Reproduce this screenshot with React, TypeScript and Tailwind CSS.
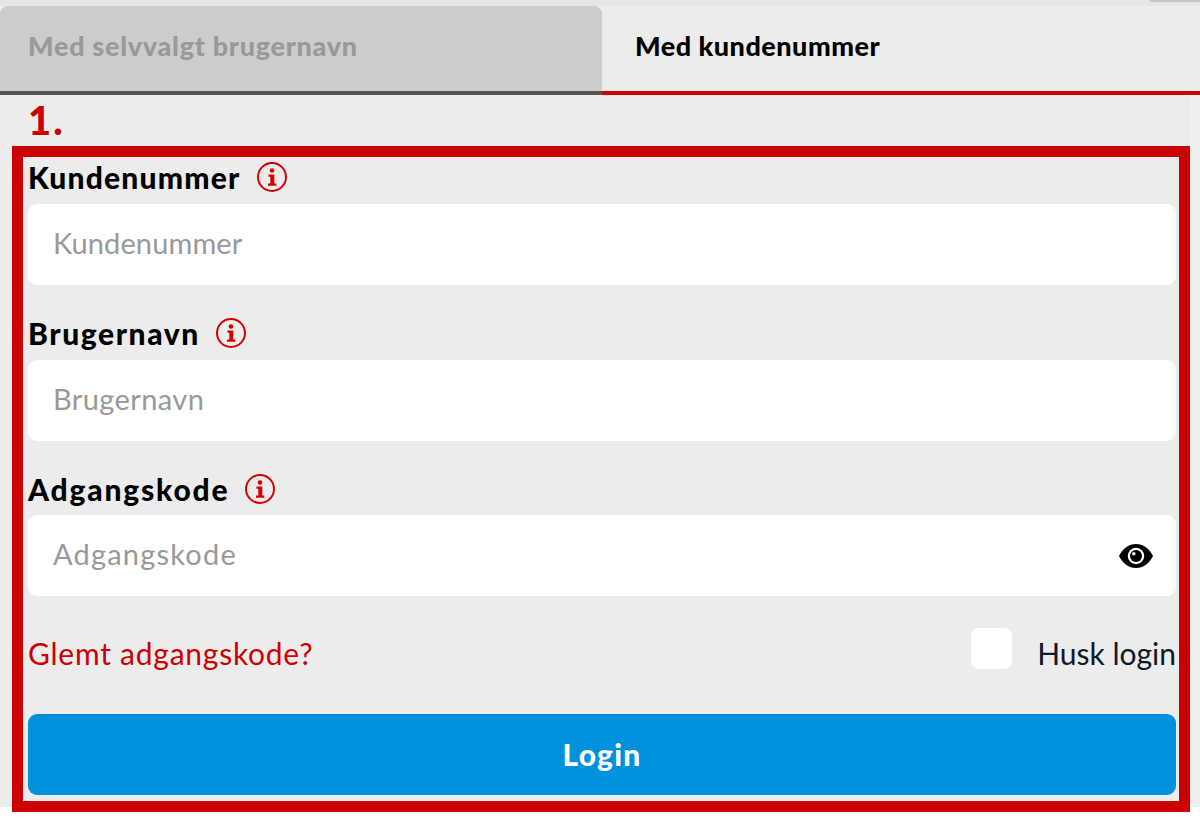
const fields = [
  { label: 'Kundenummer', labelClass: 'mb-[7px] tracking-[1.2px]', inputClass: 'tracking-[0.1px]' },
  { label: 'Brugernavn', labelClass: 'mb-[7px] tracking-[1.6px]', inputClass: 'tracking-[0.4px]' },
  { label: 'Adgangskode', labelClass: 'mb-[6px] tracking-[1.8px]', inputClass: 'tracking-[1.2px]', secret: true },
];

function InfoIcon() {
  return (
    <svg width="32" height="32" viewBox="0 0 32 32" fill="none" className="shrink-0">
      <circle cx="16" cy="16" r="14" stroke="#d40000" strokeWidth="2" />
      <circle cx="16" cy="9.500" r="2.300" fill="#d40000" />
      <path d="M12.500 13.500h5.800v9h2v2.200h-8.300v-2.200h2.300v-6.800h-1.800z" fill="#d40000" />
    </svg>
  );
}

function EyeIcon() {
  return (
    <svg width="36" height="26" viewBox="0 0 36 26" className="shrink-0">
      <path d="M1 13C5 5 11 1 18 1S31 5 35 13c-4 8-10 12-17 12S5 21 1 13z" fill="#000" />
      <circle cx="18" cy="13" r="8.200" fill="#fff" />
      <circle cx="18" cy="13" r="6" fill="#000" />
      <circle cx="15.800" cy="10.800" r="1.800" fill="#fff" />
    </svg>
  );
}

export default function App() {
  return (
    <div className="w-[1200px] h-[824px] bg-white font-['Lato',sans-serif] overflow-hidden">
      <div className="h-[807px] bg-[#efefef]">
        <div className="h-[6px] bg-[#e6e6e6] flex justify-end">
          <div className="w-[50px] h-[2px] bg-[#c4c4c4]" />
        </div>

        {/* Tabs */}
        <div className="flex h-[89px]">
          <div className="w-[602px] flex items-center pl-[28px] pb-[4px] bg-[#cccccc] rounded-t-[8px] border-b-4 border-[#555555] text-[27px] tracking-[0.7px] font-black text-[#999999]">
            Med selvvalgt brugernavn
          </div>
          <div className="flex-1 flex items-center pl-[33px] pb-[4px] bg-[#ececec] border-b-4 border-[#cc0000] text-[27px] tracking-[0.5px] font-black text-black">
            Med kundenummer
          </div>
        </div>

        <div className="w-[1190px] h-[712px] bg-[#ececec]">
          <div className="h-[51px] pl-[28px] pt-[2px] text-[40px] leading-[46px] tracking-[2px] font-black text-[#cc0000]">1.</div>

          {/* Login form */}
          <div className="ml-[12px] w-[1178px] h-[666px] border-[11px] border-[#cc0000] pl-[5px] pr-[3px]">
            <div className="flex flex-col gap-[28px]">
              {fields.map((field) => (
                <div key={field.label}>
                  <div className={`h-10 flex items-center gap-[15px] text-[30px] font-black text-black ${field.labelClass}`}>
                    <span>{field.label}</span>
                    <InfoIcon />
                  </div>
                  <div className="h-[81px] flex items-center pl-[25px] pr-[22px] bg-white rounded-[9px]">
                    <input
                      type="text"
                      placeholder={field.label}
                      className={`flex-1 min-w-0 pb-[4px] bg-transparent text-[29px] outline-none placeholder:text-[#999999] ${field.inputClass}`}
                    />
                    {field.secret && <EyeIcon />}
                  </div>
                </div>
              ))}
            </div>

            <div className="mt-[32px] h-[41px] flex items-center justify-between">
              <a className="pt-[10px] text-[30px] tracking-[0.75px] text-[#cc0000]">Glemt adgangskode?</a>
              <label className="flex items-center gap-[25px]">
                <span className="w-[41px] h-[41px] bg-white rounded-[8px]" />
                <span className="pt-[10px] text-[30px] text-[#111827]">Husk login</span>
              </label>
            </div>

            <button className="mt-[45px] w-full h-[81px] bg-[#0091dc] rounded-[9px] text-[30px] tracking-[1.2px] font-black text-white">
              Login
            </button>
          </div>
        </div>
      </div>
    </div>
  );
}
